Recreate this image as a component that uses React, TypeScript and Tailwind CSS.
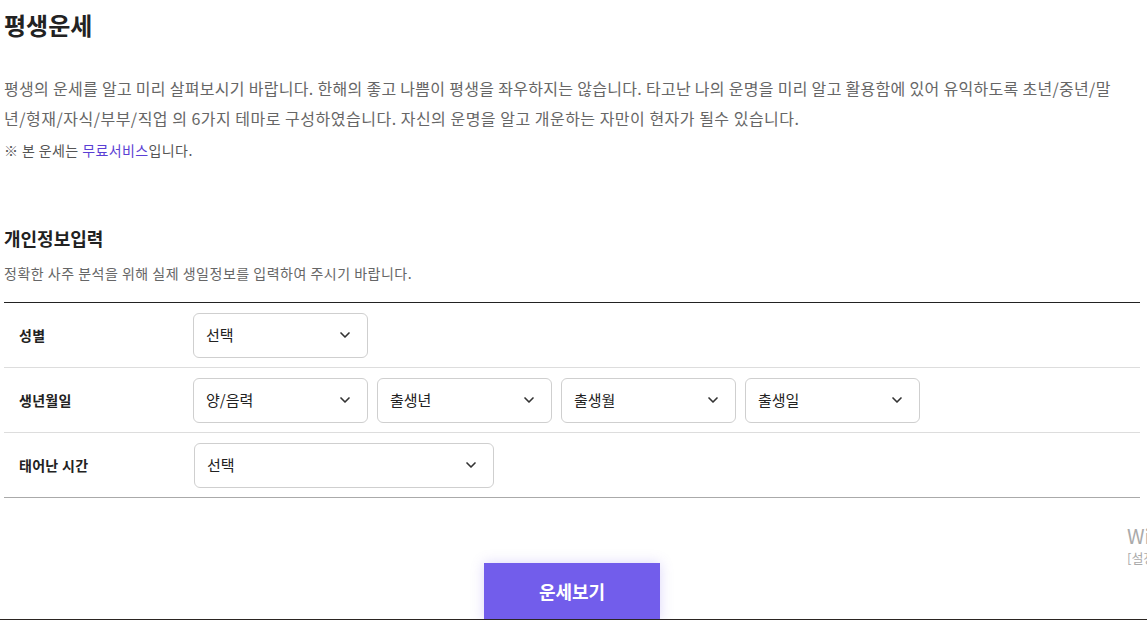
import { ChevronDown } from 'lucide-react';

const font = { fontFamily: '"Noto Sans CJK KR", "Noto Sans", sans-serif' };

function Select({ label, width }: { label: string; width: string }) {
  return (
    <div
      className={`${width} h-[45px] flex items-center justify-between pl-[12px] pr-[14px] border border-[#cfcfcf] rounded-[6px] bg-white text-[15px] text-[#222]`}
    >
      <span>{label}</span>
      <ChevronDown className="w-[16px] h-[16px] text-[#333]" strokeWidth={2.5} />
    </div>
  );
}

export default function App() {
  return (
    <div className="relative h-[620px] overflow-hidden bg-white border-b border-[#2b2522]" style={font}>
      <div className="w-[1136px] ml-[4px]">
        <h1 className="pt-[7px] text-[24px] leading-[36px] font-bold text-[#222]">평생운세</h1>

        <p className="mt-[30px] text-[16px] leading-[30px] tracking-[0.3px] text-[#666] whitespace-nowrap">
          평생의 운세를 알고 미리 살펴보시기 바랍니다. 한해의 좋고 나쁨이 평생을 좌우하지는 않습니다. 타고난 나의 운명을 미리 알고 활용함에 있어 유익하도록 초년/중년/말
          <br />
          <span className="tracking-[0.5px]">
            년/형재/자식/부부/직업 의 6가지 테마로 구성하였습니다. 자신의 운명을 알고 개운하는 자만이 현자가 될수 있습니다.
          </span>
        </p>
        <p className="mt-[7px] text-[14px] leading-[20px] tracking-[0.4px] text-[#555]">
          ※ 본 운세는 <span className="text-[#5b3fd4]">무료서비스</span>입니다.
        </p>

        <h2 className="mt-[65px] text-[18px] leading-[26px] font-bold text-[#222]">개인정보입력</h2>
        <p className="mt-[12px] text-[14px] leading-[20px] tracking-[0.5px] text-[#666]">
          정확한 사주 분석을 위해 실제 생일정보를 입력하여 주시기 바랍니다.
        </p>

        <div className="mt-[19px] border-t border-[#222]">
          <div className="h-[65px] flex items-center border-b border-[#ddd]">
            <div className="w-[189px] pl-[15px] text-[14px] font-bold text-[#222] tracking-[0.3px]">성별</div>
            <Select label="선택" width="w-[175px]" />
          </div>
          <div className="h-[65px] flex items-center border-b border-[#ddd]">
            <div className="w-[189px] pl-[15px] text-[14px] font-bold text-[#222] tracking-[0.3px]">생년월일</div>
            <div className="flex gap-[9px]">
              <Select label="양/음력" width="w-[175px]" />
              <Select label="출생년" width="w-[175px]" />
              <Select label="출생월" width="w-[175px]" />
              <Select label="출생일" width="w-[175px]" />
            </div>
          </div>
          <div className="h-[65px] flex items-center border-b border-[#aaa]">
            <div className="w-[190px] pl-[15px] text-[14px] font-bold text-[#222] tracking-[0.3px]">태어난 시간</div>
            <Select label="선택" width="w-[300px]" />
          </div>
        </div>

        <div className="mt-[65px] flex justify-center">
          <button className="w-[176px] h-[57px] bg-[#725deb] text-white text-[18px] font-bold shadow-[0_0_12px_rgba(114,93,235,0.25)]">
            운세보기
          </button>
        </div>
      </div>

      <div className="absolute left-[1127px] top-[524px] whitespace-nowrap text-[#aaa]">
        <div className="text-[20px] leading-[24px]">Windows 정품 인증</div>
        <div className="text-[13px] leading-[20px]">[설정]으로 이동하여 Windows를 정품 인증합니다.</div>
      </div>
    </div>
  );
}
